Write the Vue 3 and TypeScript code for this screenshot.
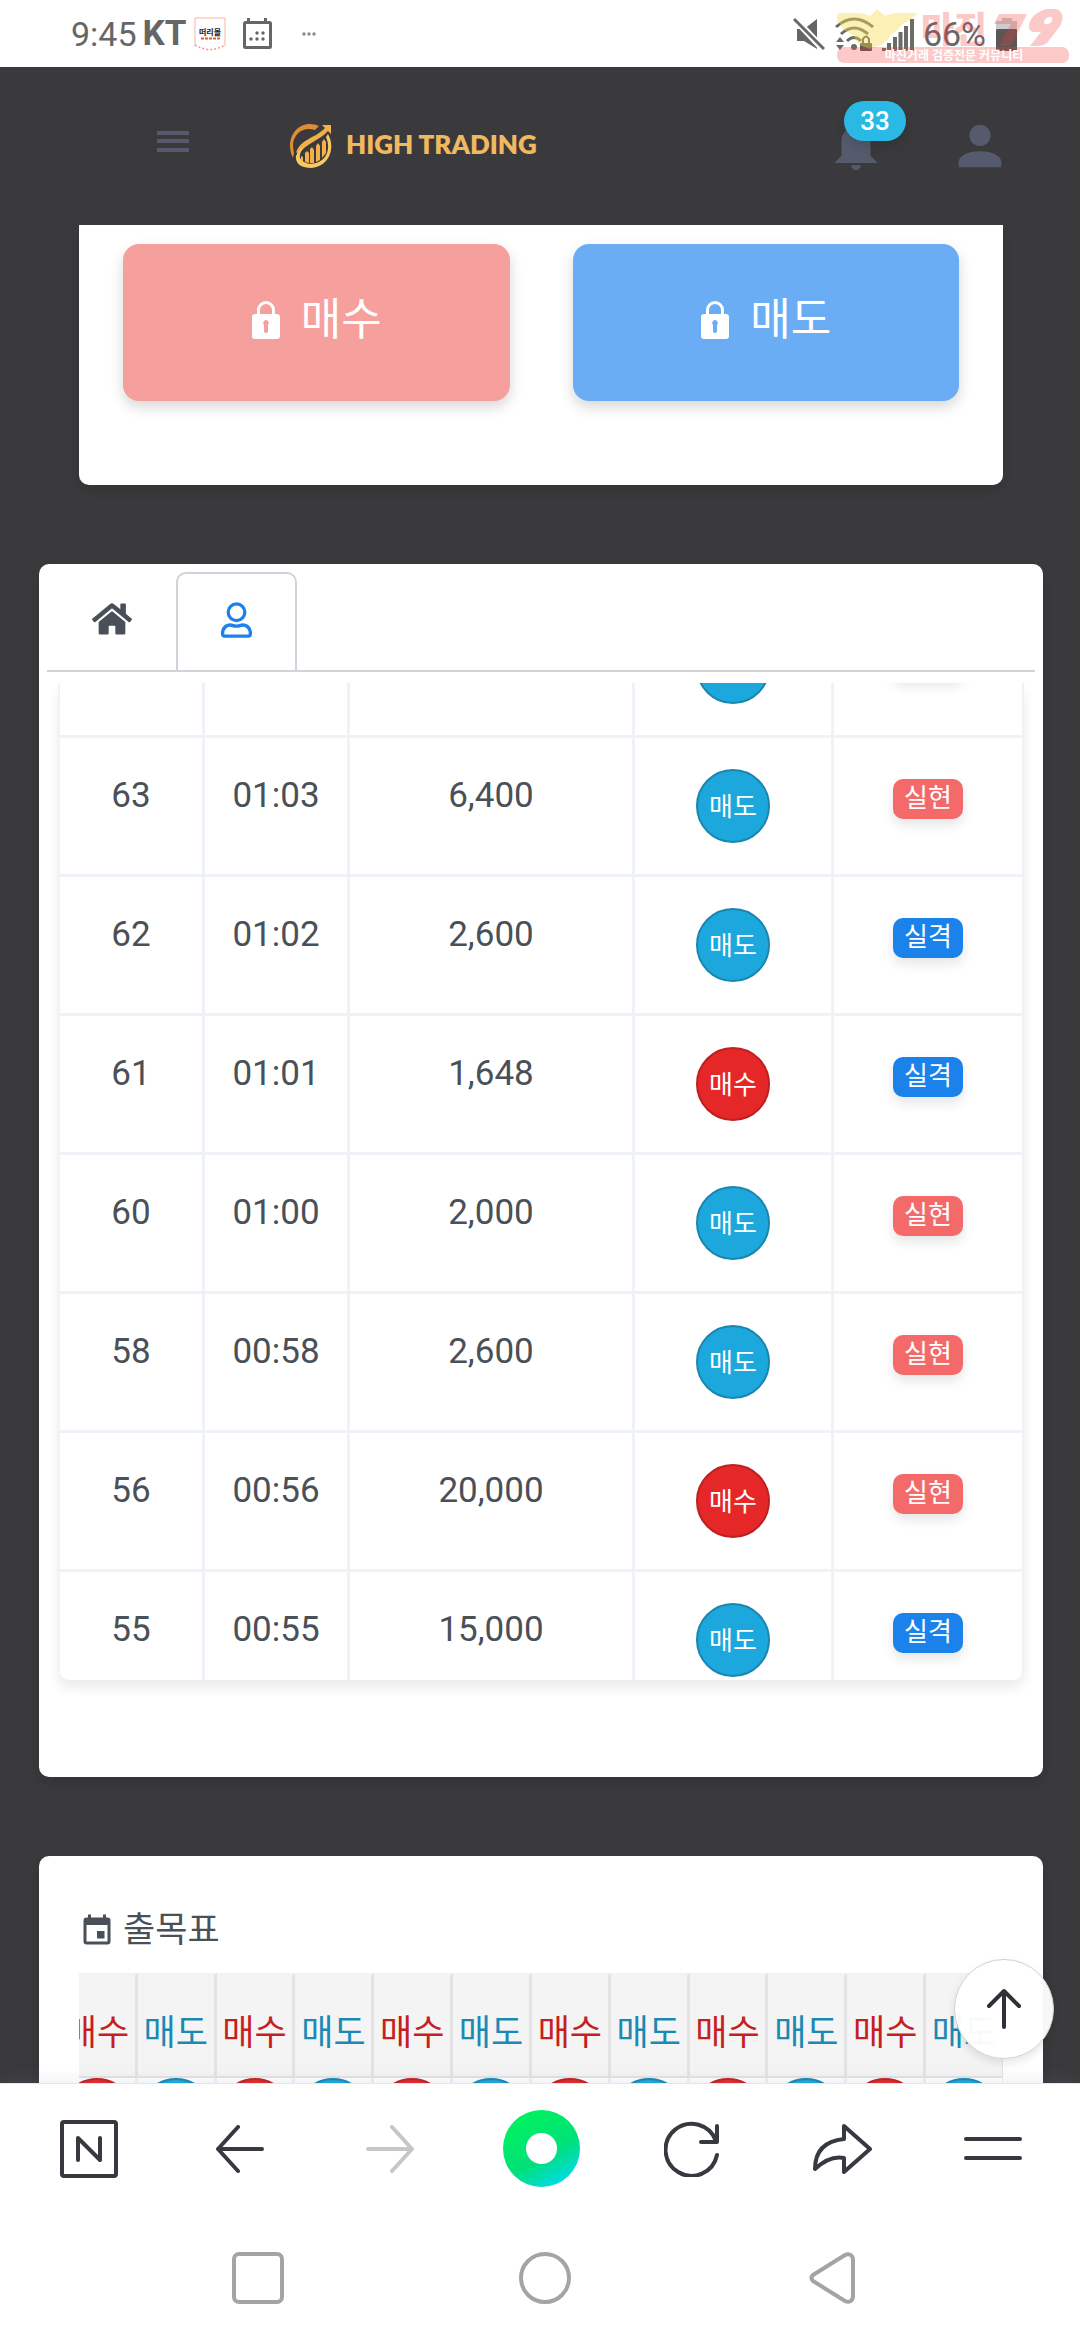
<script setup lang="ts">
import { onMounted, ref } from 'vue'

type Side = 'buy' | 'sell'

interface Trade {
  round: number
  time: string
  amount: string
  side: Side
  won: boolean
}

const sideLabel: Record<Side, string> = { buy: '매수', sell: '매도' }

const trades: Trade[] = [
  { round: 64, time: '01:04', amount: '', side: 'sell', won: true },
  { round: 63, time: '01:03', amount: '6,400', side: 'sell', won: true },
  { round: 62, time: '01:02', amount: '2,600', side: 'sell', won: false },
  { round: 61, time: '01:01', amount: '1,648', side: 'buy', won: false },
  { round: 60, time: '01:00', amount: '2,000', side: 'sell', won: true },
  { round: 58, time: '00:58', amount: '2,600', side: 'sell', won: true },
  { round: 56, time: '00:56', amount: '20,000', side: 'buy', won: true },
  { round: 55, time: '00:55', amount: '15,000', side: 'sell', won: false },
]

const streaks: Side[] = Array.from({ length: 12 }, (_, i) => (i % 2 === 0 ? 'buy' : 'sell'))

const historyPanel = ref<HTMLElement | null>(null)
const trendPanel = ref<HTMLElement | null>(null)

onMounted(() => {
  if (historyPanel.value) historyPanel.value.scrollTop = 84
  if (trendPanel.value) trendPanel.value.scrollLeft = 20
})
</script>

<template>
  <div class="app">
    <div class="status">
      <span class="clock">9:45</span>
      <b class="carrier">KT</b>
      <svg class="st-shop" width="32" height="34" viewBox="0 0 32 34">
        <path d="M1 29V1h30v28" fill="none" stroke="#f9b3a4" stroke-width="1" />
        <path d="M1 28q15 9 30 0" fill="none" stroke="#f49a8c" stroke-width="1.5" stroke-dasharray="2 2" />
        <text x="16" y="18" text-anchor="middle" font-size="8" font-weight="700" fill="#222">떠리몰</text>
        <path d="M7 21.500h19" stroke="#f0563a" stroke-width="2" stroke-dasharray="3 1" />
      </svg>
      <svg class="st-cal" width="30" height="32" viewBox="0 0 30 32">
        <rect x="1.500" y="4.500" width="26" height="25" rx="1" fill="none" stroke="#666" stroke-width="3" />
        <path d="M5.500 0v5M22.500 0v5" stroke="#666" stroke-width="3" />
        <g fill="#666">
          <circle cx="14" cy="15" r="1.700" /><circle cx="20" cy="15" r="1.700" />
          <circle cx="8" cy="21" r="1.700" /><circle cx="14" cy="21" r="1.700" /><circle cx="20" cy="21" r="1.700" />
        </g>
      </svg>
      <svg class="st-dots" width="16" height="6" viewBox="0 0 16 6" fill="#8a8a8a">
        <circle cx="3" cy="3" r="1.700" /><circle cx="8" cy="3" r="1.700" /><circle cx="13" cy="3" r="1.700" />
      </svg>
      <div class="st-right">
        <svg width="32" height="34" viewBox="0 0 32 34">
          <path d="M4 12h7L24 2v30L11 24H4z" fill="#666" />
          <path d="M0 0L32 34" stroke="#fff" stroke-width="7" />
          <path d="M1 2L31 32" stroke="#666" stroke-width="3" />
        </svg>
        <svg class="st-wifi" width="40" height="34" viewBox="0 0 40 34">
          <g fill="none" stroke="#6c6c66" stroke-width="3">
            <path d="M1 10Q19-6 38 10" /><path d="M6 17Q19 5 33 17" /><path d="M12 24q7-7 14 0" />
          </g>
          <circle cx="19" cy="30" r="3" fill="#6c6c66" />
          <path d="M1 25l4-5 4 5zM1 28l4 5 4-5z" fill="#6c6c66" />
          <rect x="25" y="26" width="12" height="8" rx="1" fill="#5c5656" />
          <path d="M28 26v-4q3-5 6 0v4" fill="none" stroke="#5c5656" stroke-width="2" />
        </svg>
        <svg class="st-signal" width="34" height="34" viewBox="0 0 34 34">
          <path d="M3 34v-3M8 34v-8M14 34V20M19.500 34V15M25 34V9M31 34V2" stroke="#6c6c66" stroke-width="4" />
        </svg>
        <span class="clock charge">66%</span>
        <svg width="22" height="34" viewBox="0 0 22 34">
          <path d="M6 1h10v3h5v8H0V4h6z" fill="#ccc" />
          <rect y="12" width="21" height="22" rx="1" fill="#5e5656" />
        </svg>
      </div>
      <svg class="stamp" width="236" height="56" viewBox="0 0 236 56">
        <g fill="#f7df52" opacity=".42">
          <path d="M2 4h22l9 3 7-7 8 7 9-3h24l-8 7-8 4-4 6-8 5-7 9-13 5-11-4-6-10-9-5-4-6-6-4z" />
          <circle cx="41" cy="20" r="14" />
        </g>
        <g fill="#f53a3a" opacity=".27">
          <rect y="38" width="232" height="16" rx="7" />
          <text x="84" y="34" font-size="36" font-weight="900">마진</text>
          <path d="M162 5h28l-16 32h-12l12-22h-17zM196 23c-9-3-3-19 14-23 14-3 19 6 13 17l-13 17q-4 3-10 3h-7l11-14zM208 15c5 2 10-5 6-7-5-1-9 5-6 7z" fill-rule="evenodd" />
        </g>
        <text x="117" y="51" text-anchor="middle" font-size="12" font-weight="700" fill="#fff">마진거래 검증전문 커뮤니티</text>
      </svg>
    </div>

    <header class="top">
      <button class="plain" type="button" aria-label="메뉴">
        <svg width="32" height="44" viewBox="0 0 32 44" fill="#555b6d">
          <rect y="7" width="32" height="4" /><rect y="15" width="32" height="4" /><rect y="24" width="32" height="4" />
        </svg>
      </button>
      <a class="brand" href="#">
        <svg width="44" height="44" viewBox="0 0 44 44">
          <path d="M4 34C-4 18 5 0 21 0q5 0 9 2l-4 4C14 2 5 10 4 20q0 5 1 9z" fill="#dd8d36" />
          <path d="M33 1h9v9l-3-3C30 17 17 19 9 31q0-4-2-2C11 15 27 14 36 4z" fill="#f2b04b" />
          <path d="M39 10c8 14 1 33-17 34C13 44 6 40 7 32q2-6 8-9-5 6-4 11c3 5 10 7 16 5 11-3 15-15 10-26z" fill="#fac860" />
          <path d="M16 38v-9l2-2 2 2v10zM21 39V25l2-2 2 3v13zM27 38V22l2-3 2 3v14zM33 34V18l2-3 2 3v11zM12 37v-5l2 1v5z" fill="#f2b04b" />
        </svg>
        <span>HIGH TRADING</span>
      </a>
      <button class="plain bell" type="button" aria-label="알림">
        <svg width="58" height="58" viewBox="0 0 24 24" fill="#555b6d">
          <path d="M14 20a2 2 0 0 1-4 0h4M12 2a1 1 0 0 1 1 1v1.080c2.840.480 5 2.940 5 5.920v6l3 3H3l3-3v-6c0-2.980 2.160-5.440 5-5.920V3a1 1 0 0 1 1-1z" />
        </svg>
        <span class="count">33</span>
      </button>
      <button class="plain" type="button" aria-label="내 계정">
        <svg width="64" height="64" viewBox="0 0 24 24" fill="#555b6d">
          <path d="M12 4a4 4 0 0 1 0 8 4 4 0 0 1 0-8m0 10c4.420 0 8 1.790 8 4v2H4v-2c0-2.210 3.580-4 8-4z" />
        </svg>
      </button>
    </header>

    <main>
      <section class="card order">
        <button v-for="side in (['buy', 'sell'] as Side[])" :key="side" type="button" :class="['trade', side]">
          <svg width="30" height="38" viewBox="0 0 30 38">
            <path d="M7.500 16V9a7.500 7.500 0 0 1 15 0v7" fill="none" stroke="#fff" stroke-width="3" />
            <path d="M4 13h22q3 0 3 3v19q0 3-3 3H4q-3 0-3-3V16q0-3 3-3zm11 6a3 3 0 0 0-2 5v7q2 2 4 0v-7a3 3 0 0 0-2-5z" fill="#fff" fill-rule="evenodd" />
          </svg>
          {{ sideLabel[side] }}
        </button>
      </section>

      <section class="card history">
        <nav class="tabs">
          <a href="#" class="tab" aria-label="홈">
            <svg width="40" height="36" viewBox="0 0 576 512" fill="#495057">
              <path d="M280 148L96 300v164a16 16 0 0 0 16 16h112a16 16 0 0 0 16-16v-96a16 16 0 0 1 16-16h64a16 16 0 0 1 16 16v96a16 16 0 0 0 16 16h112a16 16 0 0 0 16-16V300L296 148a12 12 0 0 0-16 0zM572 251l-84-69V44a12 12 0 0 0-12-12h-56a12 12 0 0 0-12 12v73l-90-74a48 48 0 0 0-61 0L4 251a12 12 0 0 0-1 17l25 31a12 12 0 0 0 17 2l235-194a12 12 0 0 1 16 0l235 194a12 12 0 0 0 17-2l25-31a12 12 0 0 0-1-17z" />
            </svg>
          </a>
          <a href="#" class="tab active" aria-label="내 거래">
            <svg width="31" height="36" viewBox="0 0 448 512" fill="#1b82ec">
              <path d="M314 304c-29 0-43 16-90 16s-61-16-90-16C60 304 0 364 0 438v26c0 27 21 48 48 48h352c27 0 48-21 48-48v-26c0-74-60-134-134-134zm86 160H48v-26c0-47 39-86 86-86 15 0 39 16 90 16 52 0 75-16 90-16 47 0 86 39 86 86v26zM224 288a144 144 0 1 0 0-288 144 144 0 0 0 0 288zm0-240a96 96 0 1 1 0 192 96 96 0 0 1 0-192z" />
            </svg>
          </a>
        </nav>
        <div ref="historyPanel" class="panel">
          <table class="trades">
            <colgroup>
              <col class="c-round"><col class="c-time"><col><col class="c-side"><col class="c-result">
            </colgroup>
            <tbody>
              <tr v-for="t in trades" :key="t.round">
                <td>{{ t.round }}</td>
                <td>{{ t.time }}</td>
                <td>{{ t.amount }}</td>
                <td><span :class="['ball', t.side]">{{ sideLabel[t.side] }}</span></td>
                <td><span :class="['pill', t.won ? 'won' : 'lost']">{{ t.won ? '실현' : '실격' }}</span></td>
              </tr>
            </tbody>
          </table>
        </div>
      </section>

      <section class="card trend">
        <h2>
          <svg width="36" height="36" viewBox="0 0 24 24" fill="#495057">
            <path d="M19 19H5V8h14m-3-7v2H8V1H6v2H5a2 2 0 0 0-2 2v14a2 2 0 0 0 2 2h14a2 2 0 0 0 2-2V5a2 2 0 0 0-2-2h-1V1m-1 11h-5v5h5v-5z" />
          </svg>
          출목표
        </h2>
        <div ref="trendPanel" class="strip">
          <table class="streaks">
            <thead>
              <tr><th v-for="(s, i) in streaks" :key="i" :class="s">{{ sideLabel[s] }}</th></tr>
            </thead>
            <tbody>
              <tr><td v-for="(s, i) in streaks" :key="i"><span :class="['ball', s]"></span></td></tr>
            </tbody>
          </table>
        </div>
      </section>
    </main>

    <button class="to-top" type="button" aria-label="맨 위로">
      <svg width="36" height="42" viewBox="0 0 36 42" fill="none" stroke="#2f3038" stroke-width="4" stroke-linecap="round" stroke-linejoin="round">
        <path d="M18 39V3M3 18L18 3l15 15" />
      </svg>
    </button>

    <footer class="dock">
      <nav class="browser">
        <button class="plain" type="button" aria-label="네이버 홈">
          <svg width="58" height="58" viewBox="0 0 58 58">
            <rect x="2" y="2" width="54" height="54" rx="2" /><path d="M18 40V18l22 22V18" />
          </svg>
        </button>
        <button class="plain" type="button" aria-label="뒤로">
          <svg width="48" height="48" viewBox="0 0 48 48"><path d="M46 24H2M22 2L2 24l20 22" /></svg>
        </button>
        <button class="plain off" type="button" aria-label="앞으로" disabled>
          <svg width="48" height="48" viewBox="0 0 48 48"><path d="M2 24h44M26 2l20 22-20 22" /></svg>
        </button>
        <button class="plain" type="button" aria-label="그린닷"><span class="dot"></span></button>
        <button class="plain" type="button" aria-label="새로고침">
          <svg width="56" height="56" viewBox="0 0 56 56"><path d="M53 34A26 26 0 1 1 52 20M53 5v16H37" /></svg>
        </button>
        <button class="plain" type="button" aria-label="공유">
          <svg width="60" height="50" viewBox="0 0 60 50"><path d="M32 15V2l26 23-26 23V34Q18 31 3 45 3 18 32 15z" /></svg>
        </button>
        <button class="plain" type="button" aria-label="더보기">
          <svg width="60" height="24" viewBox="0 0 60 24"><path d="M3 2h54M3 21h54" /></svg>
        </button>
      </nav>
      <nav class="system">
        <button class="plain" type="button" aria-label="최근 앱">
          <svg width="52" height="52" viewBox="0 0 52 52"><rect x="2" y="2" width="48" height="48" rx="5" /></svg>
        </button>
        <button class="plain" type="button" aria-label="홈 화면">
          <svg width="52" height="52" viewBox="0 0 52 52"><circle cx="26" cy="26" r="24" /></svg>
        </button>
        <button class="plain" type="button" aria-label="이전">
          <svg width="46" height="52" viewBox="0 0 46 52"><path d="M44 8v36c0 5-4 7-8 5L4 29q-3-3 0-6L36 3c4-2 8 0 8 5z" /></svg>
        </button>
      </nav>
    </footer>
  </div>
</template>

<style>
body {
  background: #3a3a3c;
}
</style>

<style scoped>
.app {
  position: relative;
  display: flex;
  flex-direction: column;
  height: 100vh;
  overflow: hidden;
  background: #3a3a3c;
  color: #495057;
  font-family: Roboto, "Noto Sans CJK KR", sans-serif;
  font-size: 35px;
  line-height: 54px;
}
*,
*::before {
  box-sizing: border-box;
}
svg {
  display: block;
  flex: none;
}
.plain {
  display: flex;
  align-items: center;
  justify-content: center;
  padding: 0;
  border: 0;
  background: none;
}

.status {
  position: relative;
  display: flex;
  align-items: center;
  height: 67px;
  padding: 0 62px 0 71px;
  background: #fff;
  color: #666;
}
.clock {
  font-size: 34px;
}
.carrier {
  margin: 0 7px 0 6px;
}
.st-cal {
  margin-left: 17px;
}
.st-dots {
  margin-left: 28px;
}
.st-right {
  display: flex;
  align-items: center;
  margin-left: auto;
}
.st-wifi {
  margin-left: 10px;
}
.st-signal {
  margin-left: 6px;
}
.charge {
  margin: 0 10px 0 8px;
}
.stamp {
  position: absolute;
  top: 9px;
  right: 7px;
}

.top {
  display: flex;
  align-items: center;
  height: 158px;
  padding: 0 68px 0 157px;
}
.brand {
  display: flex;
  align-items: center;
  gap: 13px;
  margin-left: 100px;
  color: #f0b95f;
  font-family: Lato, sans-serif;
  font-size: 26px;
  font-weight: 800;
  text-decoration: none;
}
.brand span {
  padding-bottom: 4px;
}
.bell {
  position: relative;
  margin: 0 63px 0 auto;
}
.count {
  position: absolute;
  top: -16px;
  left: 17px;
  width: 62px;
  height: 40px;
  border-radius: 20px;
  background: #2ab9e5;
  box-shadow: 0 6px 12px rgba(0, 0, 0, .12);
  color: #fff;
  font-family: Roboto, sans-serif;
  font-size: 26px;
  font-weight: 500;
  line-height: 40px;
  text-align: center;
}

main {
  flex: 1;
  min-height: 0;
  padding: 0 37px 0 39px;
  overflow: hidden;
}
.card {
  border-radius: 10px;
  background: #fff;
  box-shadow: 0 6px 12px rgba(0, 0, 0, .12);
}
.order {
  display: flex;
  gap: 63px;
  margin: 0 40px;
  padding: 19px 44px 84px;
  border-radius: 0 0 10px 10px;
}
.trade {
  display: flex;
  flex: 1;
  align-items: center;
  justify-content: center;
  gap: 20px;
  height: 157px;
  padding: 0 0 6px;
  border: 0;
  border-radius: 16px;
  box-shadow: 0 6px 14px rgba(0, 0, 0, .16);
  color: #fff;
  font-family: inherit;
  font-size: 44px;
  line-height: 54px;
}
.trade.buy {
  background: #f5a09d;
}
.trade.sell {
  background: #6badf4;
}

.history {
  margin-top: 79px;
  padding: 8px 8px 97px;
}
.tabs {
  display: flex;
  border-bottom: 2px solid #ced4da;
}
.tab {
  display: flex;
  align-items: center;
  justify-content: center;
  width: 129px;
  height: 98px;
  padding-bottom: 4px;
}
.tab.active {
  width: 121px;
  border: 2px solid #ced4da;
  border-bottom: 0;
  border-radius: 10px 10px 0 0;
}
.panel {
  height: 997px;
  margin: 11px 11px 0;
  overflow: auto;
  scrollbar-width: none;
  border: solid #eff2f7;
  border-width: 0 2px;
  border-radius: 0 0 10px 10px;
  box-shadow: 0 8px 12px rgba(0, 0, 0, .08);
}
table {
  width: 100%;
  border-spacing: 0;
  table-layout: fixed;
  text-align: center;
}
.c-round,
.c-time {
  width: 145px;
}
.c-side {
  width: 199px;
}
.c-result {
  width: 188px;
}
.trades td {
  padding: 31px 0;
  border: solid #eff2f7;
  border-width: 0 3px 3px 0;
  vertical-align: top;
}
.trades td:last-child {
  border-right: 0;
}
.ball {
  display: block;
  width: 74px;
  height: 74px;
  margin: 0 auto;
  border: 2px solid #1a86b0;
  border-radius: 50%;
  background: #1ca8dd;
  color: #fff;
  font-size: 26px;
  line-height: 72px;
}
.ball.buy {
  border-color: #bd2020;
  background: #e62727;
}
.pill {
  display: block;
  width: 70px;
  height: 40px;
  margin: 10px auto 0;
  border-radius: 10px;
  box-shadow: 0 6px 12px rgba(0, 0, 0, .1);
  color: #fff;
  font-size: 26px;
  line-height: 38px;
}
.won {
  background: #f46a6a;
}
.lost {
  background: #1b82ec;
}

.trend {
  margin-top: 79px;
  padding: 54px 40px 0;
}
h2 {
  display: flex;
  align-items: center;
  gap: 8px;
  margin: 0 0 21px;
  font-size: 35px;
  font-weight: 400;
  line-height: 42px;
}
.strip {
  overflow: auto;
  scrollbar-width: none;
}
.streaks {
  width: calc(100% + 22px);
}
.streaks th {
  padding: 32px 0 15px;
  border: solid #e3e3e3;
  border-width: 2px 3px 2px 0;
  border-top-color: #eff2f7;
  background: #f4f4f4;
  color: #1a8ab5;
  font-weight: 400;
}
.streaks th.buy {
  color: #c51f1f;
}
.streaks td {
  padding: 0 0 2px;
  border-right: 3px solid #eff2f7;
}

.to-top {
  position: absolute;
  right: 26px;
  bottom: 281px;
  display: flex;
  align-items: center;
  justify-content: center;
  width: 100px;
  height: 100px;
  border: 1px solid #d0d0d2;
  border-radius: 50%;
  background: rgba(255, 255, 255, .96);
  box-shadow: 0 4px 8px rgba(0, 0, 0, .1);
}

.dock {
  position: relative;
  border-top: 1px solid #e6e7ee;
  background: #fff;
  box-shadow: 0 -4px 16px rgba(120, 130, 180, .12);
}
.browser,
.system {
  display: flex;
  height: 131px;
  padding: 0 12px 2px 14px;
}
.system {
  height: 125px;
  padding: 0 105px 0 114px;
}
.browser .plain,
.system .plain {
  flex: 1;
}
.dock svg {
  fill: none;
  stroke: #363a40;
  stroke-width: 4px;
  stroke-linecap: round;
  stroke-linejoin: round;
}
.dock .off svg {
  stroke: #c5c6c8;
}
.dock .system svg {
  stroke: #a4a4a4;
}
.dot {
  width: 77px;
  height: 77px;
  border-radius: 50%;
  background: radial-gradient(circle, #fff 15px, transparent 16px), linear-gradient(150deg, #00ef63 20%, #00e07a 58%, #00dbe6 88%);
}
</style>
